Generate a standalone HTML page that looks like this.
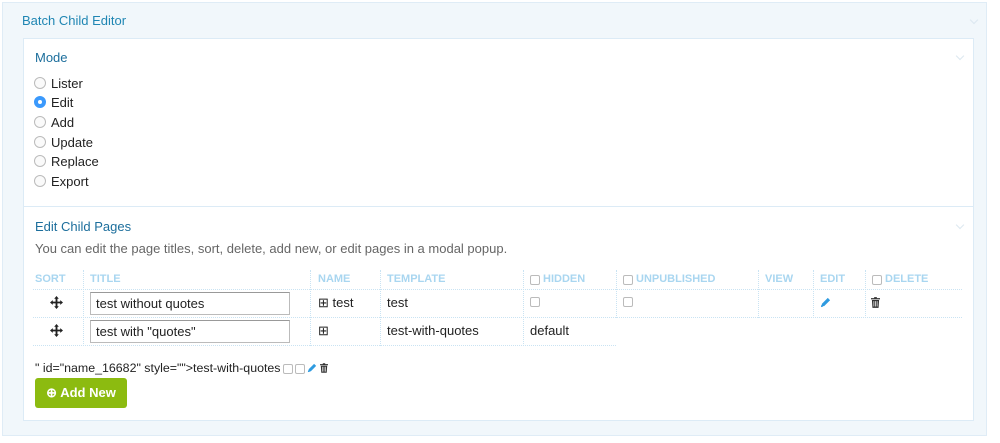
<!DOCTYPE html>
<html><head><style>
*{box-sizing:border-box;margin:0;padding:0}
body{width:1000px;height:443px;background:#fff;font-family:"Liberation Sans",sans-serif;font-size:13px;color:#222;position:relative;overflow:hidden}
.abs{position:absolute}
.outer{left:2px;top:2px;width:985px;height:434px;background:#f1f7fb;border:1px solid #dfecf6}
.inner{left:23px;top:38px;width:951px;height:383px;background:#fff;border:1px solid #dcebf6}
.h{color:#1f86b3;font-size:13px}
.h2{color:#1c6e9c;font-size:13px}
.radio{width:12px;height:12px;border:1px solid #bbb;border-radius:50%;background:#fafafa}
.radio.on{background:#3b99fc;border-color:#3b99fc}
.radio.on::after{content:"";position:absolute;left:3px;top:3px;width:4px;height:4px;border-radius:50%;background:#fff}
.lbl{font-size:13px;color:#222}
.th{font-size:11px;color:#a9d6f0;font-weight:bold;top:273px}
.vl{border-left:1px dotted #c9e3f3;width:0}
.hl{border-top:1px dotted #c9e3f3;height:0}
.cb{width:10px;height:10px;border:1px solid #bbb;border-radius:2px;background:#fff}
.inp{height:23px;border:1px solid #bbb;border-top-color:#999;background:#fff;padding:3px 5px;font-size:13px}
.chev{width:6px;height:6px;border-right:1px solid #dce8f0;border-bottom:1px solid #dce8f0;transform:rotate(45deg)}
</style></head><body>
<svg width="0" height="0" style="position:absolute"><defs>
<symbol id="mv" viewBox="0 0 14 14"><path d="M7 0L9.5 3H8v3h3V4.5L14 7l-3 2.5V8H8v3h1.5L7 14l-2.5-3H6V8H3v1.5L0 7l3-2.5V6h3V3H4.5z" fill="#222"/></symbol>
<symbol id="pen" viewBox="0 0 12 12"><path d="M8.5 1l2.5 2.5-6.5 6.5H2V7.5z M1.5 8.5l2 2L1 11z" fill="#2f9be0"/></symbol>
<symbol id="tr" viewBox="0 0 10 12"><path d="M3.5 0h3v1.2H10v1.3H0V1.2h3.5z M1 3.2h8l-.6 8.8H1.6z" fill="#333"/><path d="M3.2 4.5v6M5 4.5v6M6.8 4.5v6" stroke="#fff" stroke-width=".8"/></symbol>
</defs></svg>
<div class="abs outer"></div>
<div class="abs h" style="left:22px;top:13px">Batch Child Editor</div>
<div class="abs chev" style="left:971px;top:17px"></div>
<div class="abs inner"></div>
<div class="abs chev" style="left:957px;top:53px"></div>
<div class="abs chev" style="left:957px;top:222px"></div>
<div class="abs h2" style="left:35px;top:50px">Mode</div>
<div class="abs radio" style="left:34px;top:77px"></div><div class="abs lbl" style="left:51px;top:76px">Lister</div>
<div class="abs radio on" style="left:34px;top:96px"></div><div class="abs lbl" style="left:51px;top:95px">Edit</div>
<div class="abs radio" style="left:34px;top:116px"></div><div class="abs lbl" style="left:51px;top:115px">Add</div>
<div class="abs radio" style="left:34px;top:136px"></div><div class="abs lbl" style="left:51px;top:135px">Update</div>
<div class="abs radio" style="left:34px;top:155px"></div><div class="abs lbl" style="left:51px;top:154px">Replace</div>
<div class="abs radio" style="left:34px;top:175px"></div><div class="abs lbl" style="left:51px;top:174px">Export</div>
<div class="abs" style="left:24px;top:206px;width:949px;border-top:1px solid #dcebf6"></div>
<div class="abs h2" style="left:35px;top:219px">Edit Child Pages</div>
<div class="abs" style="left:35px;top:241px;color:#666;font-size:13px">You can edit the page titles, sort, delete, add new, or edit pages in a modal popup.</div>

<div class="abs th" style="left:35px">SORT</div>
<div class="abs th" style="left:90px">TITLE</div>
<div class="abs th" style="left:318px">NAME</div>
<div class="abs th" style="left:387px">TEMPLATE</div>
<div class="abs cb" style="left:530px;top:275px"></div><div class="abs th" style="left:543px">HIDDEN</div>
<div class="abs cb" style="left:623px;top:275px"></div><div class="abs th" style="left:636px">UNPUBLISHED</div>
<div class="abs th" style="left:765px">VIEW</div>
<div class="abs th" style="left:820px">EDIT</div>
<div class="abs cb" style="left:872px;top:275px"></div><div class="abs th" style="left:885px">DELETE</div>

<div class="abs hl" style="left:33px;top:289px;width:929px"></div>
<div class="abs hl" style="left:33px;top:317px;width:929px"></div>
<div class="abs hl" style="left:33px;top:345px;width:583px"></div>
<div class="abs vl" style="left:83px;top:270px;height:76px"></div>
<div class="abs vl" style="left:310px;top:270px;height:76px"></div>
<div class="abs vl" style="left:380px;top:270px;height:76px"></div>
<div class="abs vl" style="left:523px;top:270px;height:76px"></div>
<div class="abs vl" style="left:616px;top:270px;height:48px"></div>
<div class="abs vl" style="left:758px;top:270px;height:48px"></div>
<div class="abs vl" style="left:813px;top:270px;height:48px"></div>
<div class="abs vl" style="left:865px;top:270px;height:48px"></div>

<svg class="abs" style="left:50px;top:296px" width="13" height="13"><use href="#mv"/></svg>
<svg class="abs" style="left:50px;top:324px" width="13" height="13"><use href="#mv"/></svg>
<div class="abs inp" style="left:90px;top:292px;width:200px">test without quotes</div>
<div class="abs inp" style="left:90px;top:320px;width:200px">test with "quotes"</div>
<div class="abs" style="left:318px;top:295px">⊞ test</div>
<div class="abs" style="left:318px;top:323px">⊞</div>
<div class="abs" style="left:387px;top:295px">test</div>
<div class="abs" style="left:387px;top:323px">test-with-quotes</div>
<div class="abs" style="left:530px;top:323px">default</div>
<div class="abs cb" style="left:530px;top:297px"></div>
<div class="abs cb" style="left:623px;top:297px"></div>
<svg class="abs" style="left:820px;top:297px" width="11" height="11"><use href="#pen"/></svg>
<svg class="abs" style="left:871px;top:297px" width="9" height="11"><use href="#tr"/></svg>

<div class="abs" style="left:35px;top:361px;font-size:12.4px;white-space:nowrap">" id="name_16682" style=""&gt;test-with-quotes</div>
<div class="abs cb" style="left:283px;top:364px"></div>
<div class="abs cb" style="left:295px;top:364px"></div>
<svg class="abs" style="left:307px;top:363px" width="10" height="10"><use href="#pen"/></svg>
<svg class="abs" style="left:320px;top:363px" width="8" height="10"><use href="#tr"/></svg>

<div class="abs" style="left:35px;top:378px;width:92px;height:30px;background:#8cbb10;border-radius:3px;color:#fff;font-weight:bold;font-size:13px;line-height:30px;text-align:center">⊕ Add New</div>
</body></html>
